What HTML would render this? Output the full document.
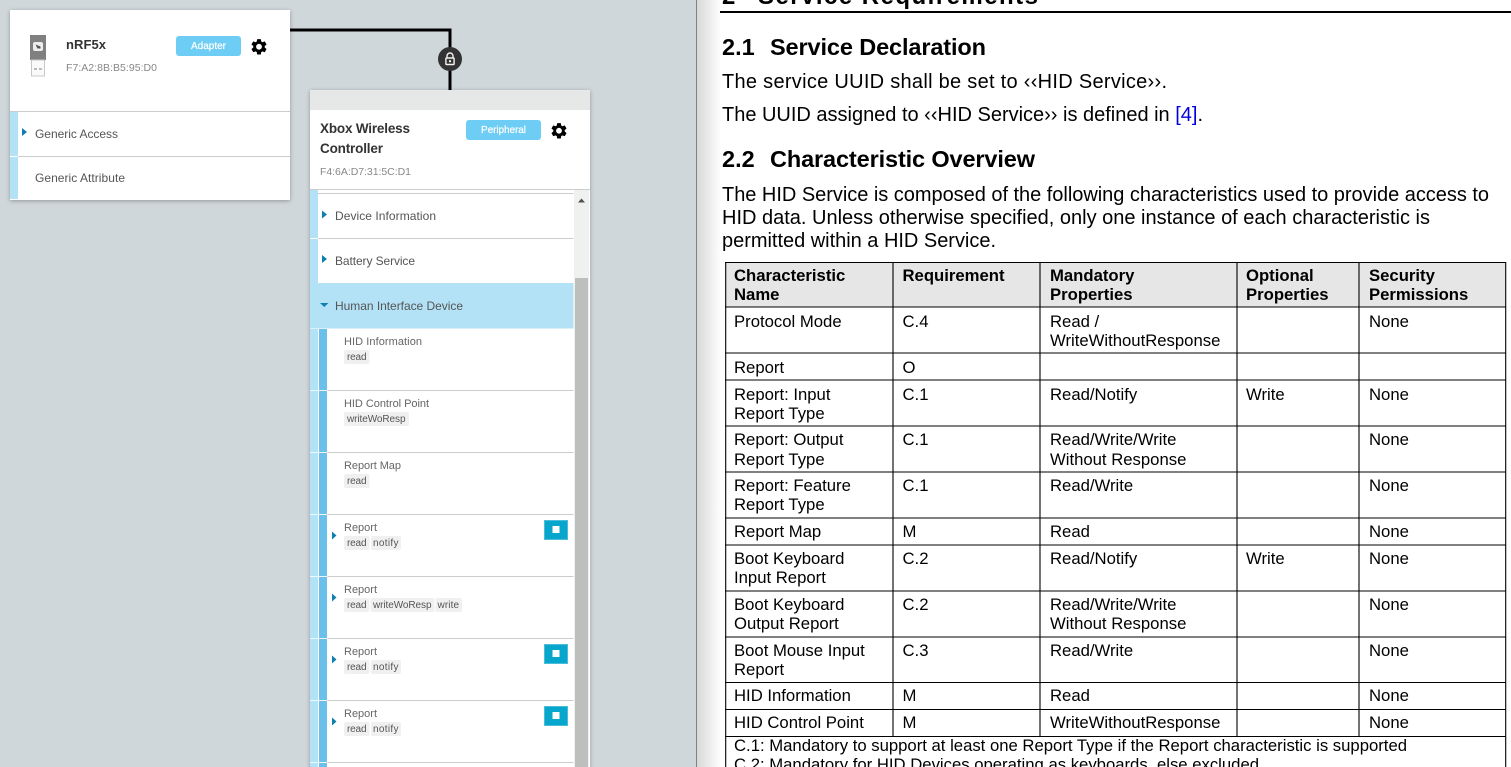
<!DOCTYPE html>
<html><head><meta charset="utf-8"><style>
html,body{margin:0;padding:0;width:1511px;height:767px;overflow:hidden;background:#fff}
svg{display:block;position:absolute;left:0;top:0}
.u{font-family:"Liberation Sans",sans-serif}
.d{font-size:20px;fill:#000}
.t{font-size:16.7px;fill:#000}
.b{font-size:16.7px;font-weight:bold;fill:#000}
.h{font-size:23.5px;font-weight:bold;fill:#000}
.s{font-size:12px;fill:#555}
.n{font-size:11px;fill:#666}
.g{font-size:10px;fill:#555}
.a{font-size:10.5px;fill:#888}
.w{font-size:10px;fill:#fff;stroke:#fff;stroke-width:.2;text-anchor:middle}
.l{stroke:#000;stroke-width:1.1}
</style></head><body>
<svg class="u" width="1511" height="767" viewBox="0 0 1511 767" xmlns="http://www.w3.org/2000/svg">
<defs>
<linearGradient id="sh" x1="0" x2="1" y1="0" y2="0"><stop offset="0" stop-color="#d8d8d8"/><stop offset="1" stop-color="#fff"/></linearGradient>
<filter id="cs" x="-10%" y="-10%" width="120%" height="120%"><feDropShadow dx="0" dy="1" stdDeviation="2" flood-color="#000" flood-opacity=".3"/></filter>
<path id="gear" d="M19.14 12.94c.04-.3.06-.61.06-.94 0-.32-.02-.64-.07-.94l2.03-1.58c.18-.14.23-.41.12-.61l-1.92-3.32c-.12-.22-.37-.29-.59-.22l-2.39.96c-.5-.38-1.03-.7-1.62-.94l-.36-2.54c-.04-.24-.24-.41-.48-.41h-3.84c-.24 0-.43.17-.47.41l-.36 2.54c-.59.24-1.13.57-1.62.94l-2.39-.96c-.22-.08-.47 0-.59.22L2.74 8.87c-.12.21-.08.47.12.61l2.03 1.58c-.05.3-.09.63-.09.94s.02.64.07.94l-2.03 1.58c-.18.14-.23.41-.12.61l1.92 3.32c.12.22.37.29.59.22l2.39-.96c.5.38 1.03.7 1.62.94l.36 2.54c.05.24.24.41.48.41h3.84c.24 0 .44-.17.47-.41l.36-2.54c.59-.24 1.13-.56 1.62-.94l2.39.96c.22.08.47 0 .59-.22l1.92-3.32c.12-.22.07-.47-.12-.61l-2.01-1.58zM12 15.6c-1.98 0-3.6-1.62-3.6-3.6s1.62-3.6 3.6-3.6 3.6 1.62 3.6 3.6-1.62 3.6-3.6 3.6z"/>
<g id="tog"><rect x="0.5" y="0.5" width="23" height="19" fill="#06a6cd" stroke="#4cbcd9"/><rect x="8.5" y="6" width="7" height="7" fill="#fff"/></g>
</defs>

<!-- left canvas -->
<rect x="0" y="0" width="696" height="767" fill="#cfd7db"/>
<rect x="696" y="0" width="1.4" height="767" fill="#7d8486"/>
<rect x="697" y="0" width="24" height="767" fill="url(#sh)"/>

<!-- connector -->
<path d="M290 30H450V92" fill="none" stroke="#000" stroke-width="3"/>
<circle cx="450" cy="59" r="12" fill="#333"/>
<path d="M447 58v-2a3 3 0 0 1 6 0v2" fill="none" stroke="#f2f2f2" stroke-width="1.4"/>
<rect x="445.900" y="58" width="8.200" height="6.500" rx=".8" fill="none" stroke="#f2f2f2" stroke-width="1.400"/>
<rect x="449" y="60.200" width="2" height="2" fill="#f2f2f2"/>

<!-- card 1 -->
<rect x="10" y="10" width="280" height="190" fill="#fff" filter="url(#cs)"/>
<rect x="30" y="35" width="16" height="25" fill="#808080"/>
<rect x="33" y="42" width="10" height="9" rx="2" fill="#eee"/>
<path d="M35.500 44.500L40.500 46.500V48.500H37.500z" fill="#555"/>
<rect x="31.500" y="60" width="13" height="16" fill="#fafafa" stroke="#c8c8c8"/>
<rect x="34" y="68" width="3" height="2" fill="#bbb"/><rect x="39" y="68" width="3" height="2" fill="#bbb"/>
<text x="66" y="49" font-size="13px" font-weight="bold" fill="#333" textLength="40">nRF5x</text>
<text x="66" y="71" class="a" textLength="91">F7:A2:8B:B5:95:D0</text>
<rect x="176" y="36" width="65" height="20" rx="3" fill="#6dcdf5"/>
<text x="208.500" y="49" class="w" textLength="35">Adapter</text>
<use href="#gear" transform="translate(249.400 37.200) scale(.8)"/>
<rect x="10" y="111" width="280" height="1" fill="#ccc"/>
<rect x="18" y="156" width="272" height="1" fill="#ccc"/>
<rect x="10" y="112" width="8" height="44" fill="#b3e1f5"/>
<rect x="10" y="157" width="8" height="42" fill="#b3e1f5"/>
<path d="M22 128l5 4-5 4z" fill="#0f7fb0"/>
<text x="35" y="138" class="s" textLength="83">Generic Access</text>
<text x="35" y="182" class="s" textLength="90">Generic Attribute</text>

<!-- card 2 -->
<rect x="310" y="90" width="280" height="690" fill="#fff" filter="url(#cs)"/>
<rect x="310" y="90" width="280" height="20" fill="#e6e8e8"/>
<text x="320" y="133" font-size="13.500px" font-weight="bold" fill="#333" textLength="90">Xbox Wireless</text>
<text x="320" y="153" font-size="13.500px" font-weight="bold" fill="#333" textLength="63">Controller</text>
<text x="320" y="175" class="a" textLength="91">F4:6A:D7:31:5C:D1</text>
<rect x="466" y="120" width="75" height="20" rx="3" fill="#6dcdf5"/>
<text x="503.500" y="133" class="w" textLength="45">Peripheral</text>
<use href="#gear" transform="translate(549.400 121.200) scale(.8)"/>
<rect x="310" y="189" width="280" height="1" fill="#ccc"/>

<!-- scrollbar -->
<rect x="574" y="190" width="15" height="577" fill="#eff1f1"/>
<rect x="575" y="278" width="13" height="489" fill="#bdbfbf"/>
<path d="M578 202.500l3.500-4 3.500 4z" fill="#505050"/>

<!-- services -->
<rect x="310" y="190" width="8" height="48" fill="#b3e1f5"/>
<rect x="310" y="239" width="8" height="44" fill="#b3e1f5"/>
<rect x="318" y="193" width="255.500" height="1" fill="#ccc"/>
<rect x="318" y="238" width="255.500" height="1" fill="#ccc"/>
<rect x="310" y="283" width="263.500" height="45.500" fill="#b3e1f5"/>
<path d="M322 210.500l5 4-5 4z" fill="#0f7fb0"/>
<path d="M322 255l5 4-5 4z" fill="#0f7fb0"/>
<path d="M320 303l8.500 0-4.250 4z" fill="#0f7fb0"/>
<text x="335" y="220" class="s" textLength="101">Device Information</text>
<text x="335" y="265" class="s" textLength="80">Battery Service</text>
<text x="335" y="310" class="s" fill="#445" textLength="128">Human Interface Device</text>

<!-- characteristic bars -->
<rect x="310" y="329" width="8" height="438" fill="#b3e1f5"/>
<rect x="319" y="329" width="8" height="438" fill="#6bc0ea"/>
<g fill="#eef7fb">
<rect x="310" y="390" width="17.500" height="1"/><rect x="310" y="452" width="17.500" height="1"/><rect x="310" y="514" width="17.500" height="1"/><rect x="310" y="576" width="17.500" height="1"/><rect x="310" y="638" width="17.500" height="1"/><rect x="310" y="700" width="17.500" height="1"/><rect x="310" y="762" width="17.500" height="1"/>
</g>
<g fill="#ccc">
<rect x="327.500" y="390" width="246" height="1"/><rect x="327.500" y="452" width="246" height="1"/><rect x="327.500" y="514" width="246" height="1"/><rect x="327.500" y="576" width="246" height="1"/><rect x="327.500" y="638" width="246" height="1"/><rect x="327.500" y="700" width="246" height="1"/><rect x="327.500" y="762" width="246" height="1"/>
</g>

<text x="344" y="345" class="n" textLength="78">HID Information</text>
<rect x="344" y="350" width="25.500" height="14" rx="2" fill="#f0f0f0"/><text x="347" y="360" class="g" textLength="19.500">read</text>

<text x="344" y="407" class="n" textLength="85">HID Control Point</text>
<rect x="344" y="412" width="65" height="14" rx="2" fill="#f0f0f0"/><text x="347" y="422" class="g" textLength="58.500">writeWoResp</text>

<text x="344" y="469" class="n" textLength="57">Report Map</text>
<rect x="344" y="474" width="25.500" height="14" rx="2" fill="#f0f0f0"/><text x="347" y="484" class="g" textLength="19.500">read</text>

<text x="344" y="531" class="n" textLength="33">Report</text>
<rect x="344" y="536" width="25.500" height="14" rx="2" fill="#f0f0f0"/><text x="347" y="546" class="g" textLength="19.500">read</text>
<rect x="371" y="536" width="30" height="14" rx="2" fill="#f0f0f0"/><text x="373" y="546" class="g" textLength="25.500">notify</text>
<path d="M332 531.500l4.500 4-4.500 4z" fill="#0f7fb0"/>
<use href="#tog" x="544" y="520"/>

<text x="344" y="593" class="n" textLength="33">Report</text>
<rect x="344" y="598" width="25.500" height="14" rx="2" fill="#f0f0f0"/><text x="347" y="608" class="g" textLength="19.500">read</text>
<rect x="370.500" y="598" width="64" height="14" rx="2" fill="#f0f0f0"/><text x="373" y="608" class="g" textLength="58.500">writeWoResp</text>
<rect x="435.500" y="598" width="26.500" height="14" rx="2" fill="#f0f0f0"/><text x="437.500" y="608" class="g" textLength="21.500">write</text>
<path d="M332 593.500l4.500 4-4.500 4z" fill="#0f7fb0"/>

<text x="344" y="655" class="n" textLength="33">Report</text>
<rect x="344" y="660" width="25.500" height="14" rx="2" fill="#f0f0f0"/><text x="347" y="670" class="g" textLength="19.500">read</text>
<rect x="371" y="660" width="30" height="14" rx="2" fill="#f0f0f0"/><text x="373" y="670" class="g" textLength="25.500">notify</text>
<path d="M332 655.500l4.500 4-4.500 4z" fill="#0f7fb0"/>
<use href="#tog" x="544" y="644"/>

<text x="344" y="717" class="n" textLength="33">Report</text>
<rect x="344" y="722" width="25.500" height="14" rx="2" fill="#f0f0f0"/><text x="347" y="732" class="g" textLength="19.500">read</text>
<rect x="371" y="722" width="30" height="14" rx="2" fill="#f0f0f0"/><text x="373" y="732" class="g" textLength="25.500">notify</text>
<path d="M332 717.500l4.500 4-4.500 4z" fill="#0f7fb0"/>
<use href="#tog" x="544" y="706"/>

<!-- document -->
<text x="722" y="4" font-size="24px" font-weight="bold">2</text>
<text x="758" y="4" font-size="24px" font-weight="bold" textLength="280">Service Requirements</text>
<rect x="720" y="11" width="791" height="2" fill="#000"/>
<text x="722" y="55" class="h">2.1</text>
<text x="770" y="55" class="h" textLength="216">Service Declaration</text>
<text x="722" y="88" class="d" textLength="445">The service UUID shall be set to ‹‹HID Service››.</text>
<text x="722" y="121" class="d" textLength="481">The UUID assigned to ‹‹HID Service›› is defined in <tspan fill="#0000e0">[4]</tspan>.</text>
<text x="722" y="167" class="h">2.2</text>
<text x="770" y="167" class="h" textLength="265">Characteristic Overview</text>
<text x="722" y="201" class="d" textLength="767">The HID Service is composed of the following characteristics used to provide access to</text>
<text x="722" y="224" class="d" textLength="708">HID data. Unless otherwise specified, only one instance of each characteristic is</text>
<text x="722" y="247" class="d" textLength="274">permitted within a HID Service.</text>

<!-- table -->
<rect x="726" y="263" width="779" height="44" fill="#e6e6e6"/>
<g class="l">
<path d="M725.700 262V767M893 262V737M1040 262V737M1237 262V737M1359 262V737M1505.700 262V767"/>
<path d="M725 262.500H1506M725 307H1506M725 353H1506M725 380H1506M725 426H1506M725 472H1506M725 518H1506M725 545H1506M725 591H1506M725 637H1506M725 682.500H1506M725 709.500H1506M725 736.500H1506"/>
</g>
<text x="734" y="281" class="b">Characteristic</text><text x="734" y="300" class="b">Name</text>
<text x="902.500" y="281" class="b">Requirement</text>
<text x="1050" y="281" class="b">Mandatory</text><text x="1050" y="300" class="b">Properties</text>
<text x="1246" y="281" class="b">Optional</text><text x="1246" y="300" class="b">Properties</text>
<text x="1369" y="281" class="b">Security</text><text x="1369" y="300" class="b">Permissions</text>

<text x="734" y="327" class="t">Protocol Mode</text><text x="902.500" y="327" class="t">C.4</text><text x="1050" y="327" class="t">Read /</text><text x="1050" y="346" class="t">WriteWithoutResponse</text><text x="1369" y="327" class="t">None</text>
<text x="734" y="373" class="t">Report</text><text x="902.500" y="373" class="t">O</text>
<text x="734" y="400" class="t">Report: Input</text><text x="734" y="419" class="t">Report Type</text><text x="902.500" y="400" class="t">C.1</text><text x="1050" y="400" class="t">Read/Notify</text><text x="1246" y="400" class="t">Write</text><text x="1369" y="400" class="t">None</text>
<text x="734" y="445" class="t">Report: Output</text><text x="734" y="465" class="t">Report Type</text><text x="902.500" y="445" class="t">C.1</text><text x="1050" y="445" class="t">Read/Write/Write</text><text x="1050" y="465" class="t">Without Response</text><text x="1369" y="445" class="t">None</text>
<text x="734" y="491" class="t">Report: Feature</text><text x="734" y="510" class="t">Report Type</text><text x="902.500" y="491" class="t">C.1</text><text x="1050" y="491" class="t">Read/Write</text><text x="1369" y="491" class="t">None</text>
<text x="734" y="537" class="t">Report Map</text><text x="902.500" y="537" class="t">M</text><text x="1050" y="537" class="t">Read</text><text x="1369" y="537" class="t">None</text>
<text x="734" y="564" class="t">Boot Keyboard</text><text x="734" y="583" class="t">Input Report</text><text x="902.500" y="564" class="t">C.2</text><text x="1050" y="564" class="t">Read/Notify</text><text x="1246" y="564" class="t">Write</text><text x="1369" y="564" class="t">None</text>
<text x="734" y="610" class="t">Boot Keyboard</text><text x="734" y="629" class="t">Output Report</text><text x="902.500" y="610" class="t">C.2</text><text x="1050" y="610" class="t">Read/Write/Write</text><text x="1050" y="629" class="t">Without Response</text><text x="1369" y="610" class="t">None</text>
<text x="734" y="656" class="t">Boot Mouse Input</text><text x="734" y="675" class="t">Report</text><text x="902.500" y="656" class="t">C.3</text><text x="1050" y="656" class="t">Read/Write</text><text x="1369" y="656" class="t">None</text>
<text x="734" y="701" class="t">HID Information</text><text x="902.500" y="701" class="t">M</text><text x="1050" y="701" class="t">Read</text><text x="1369" y="701" class="t">None</text>
<text x="734" y="728" class="t">HID Control Point</text><text x="902.500" y="728" class="t">M</text><text x="1050" y="728" class="t">WriteWithoutResponse</text><text x="1369" y="728" class="t">None</text>
<text x="734" y="751" class="t" textLength="673">C.1: Mandatory to support at least one Report Type if the Report characteristic is supported</text>
<text x="734" y="770" class="t" textLength="525">C.2: Mandatory for HID Devices operating as keyboards, else excluded</text>
</svg>
</body></html>
